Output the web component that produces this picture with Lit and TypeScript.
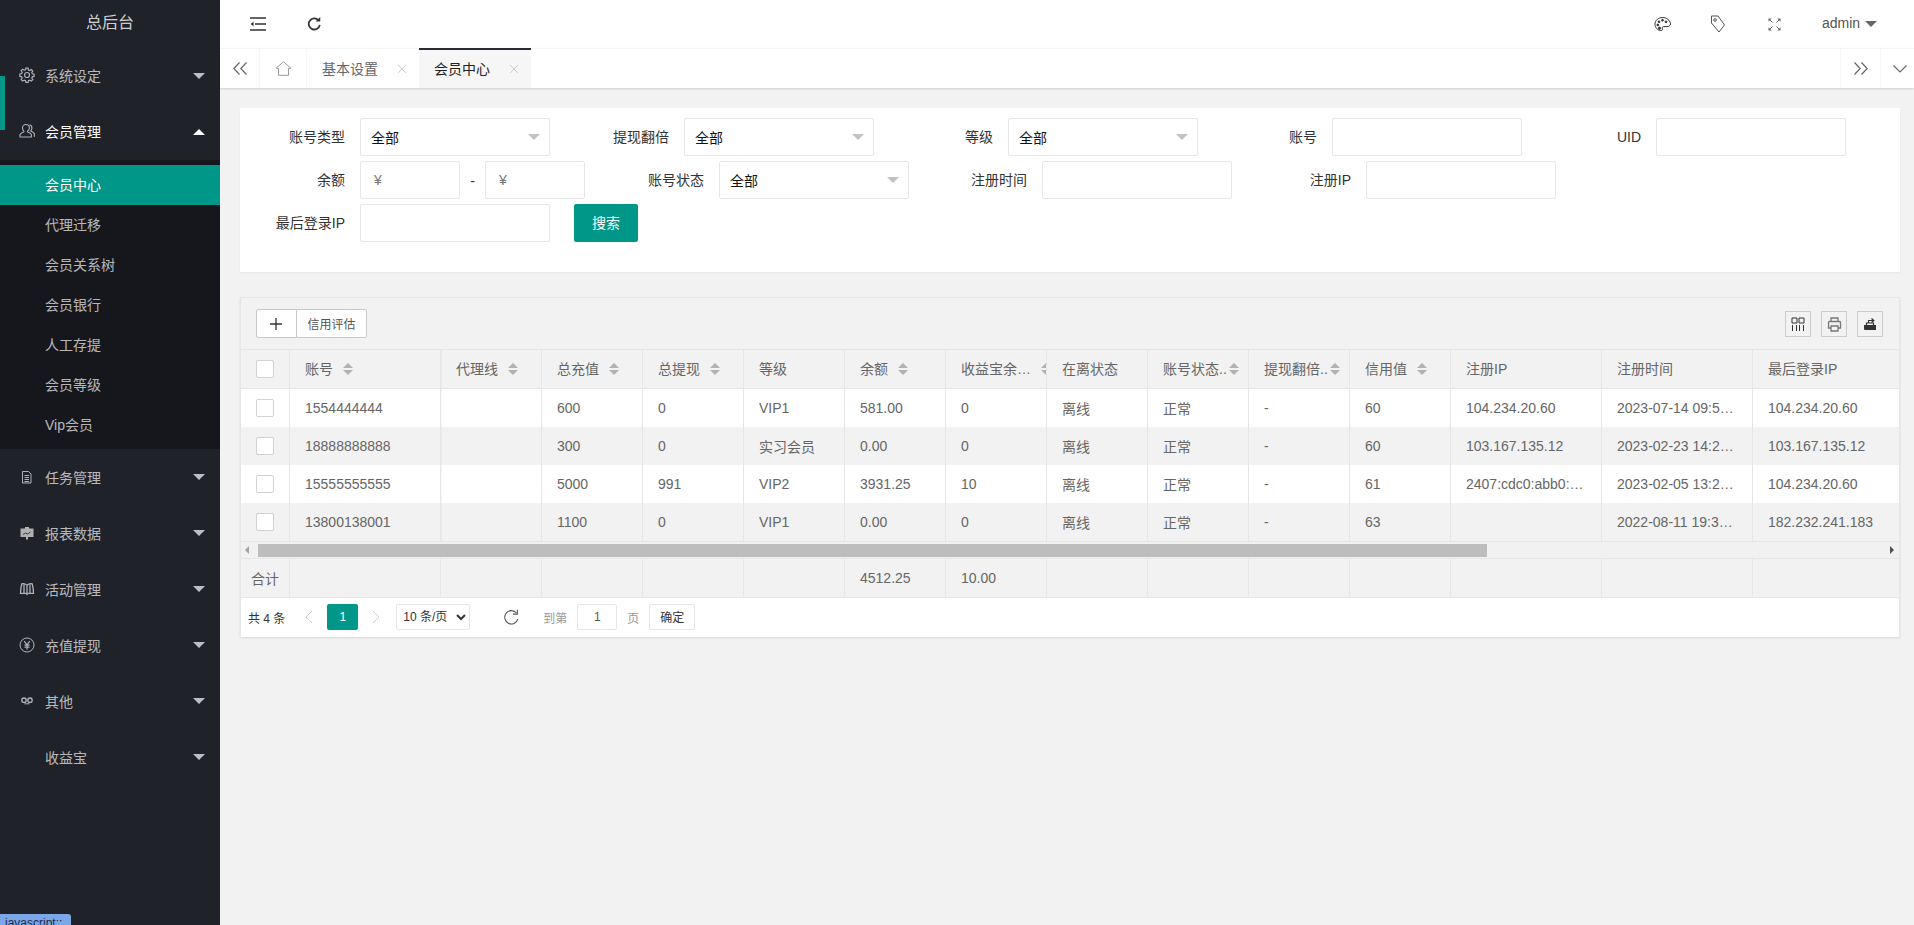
import { LitElement, html, css, svg } from "lit";
import { customElement } from "lit/decorators.js";

const I: Record<string, unknown> = {
  gear: svg`<g stroke-width="1.200"><circle cx="8" cy="8" r="2.500"/><path d="M6.900 1.200h2.200l.4 1.800 1.200.5 1.600-1 1.500 1.500-1 1.600.5 1.200 1.800.4v2.200l-1.800.4-.5 1.200 1 1.600-1.500 1.500-1.600-1-1.200.5-.4 1.800H6.900l-.4-1.800-1.200-.5-1.600 1-1.500-1.500 1-1.600-.5-1.200-1.800-.4V6.900l1.800-.4.5-1.200-1-1.600 1.500-1.500 1.600 1 1.200-.5z"/></g>`,
  user: svg`<g stroke-width="1.100"><path d="M6.700 1.500C4.800 1.500 3.500 3 3.500 5c0 1.300.5 2.400 1.300 3.100.3.300.2.800-.2 1-2 .8-3.300 1.500-3.600 2.500-.2.900-.1 1.600.1 2.400h11.200c.2-.8.3-1.500.1-2.400-.3-1-1.600-1.700-3.600-2.500-.4-.2-.5-.7-.2-1C9.900 7.400 10.400 6.300 10.400 5c0-2-1.300-3.500-3.700-3.500z"/><path d="M10.500 1.700c1.500.4 2.400 1.700 2.400 3.300 0 1.200-.5 2.300-1.200 3 2 .8 3.300 1.500 3.600 2.500.2.900.1 1.900-.1 3.400"/></g>`,
  doc: svg`<g stroke-width="1"><path d="M3.500 2.500h6l2.500 2.500v9H3.500z"/><path d="M5.500 6.500h4.500M5.500 8.500h4.500M5.500 10.500h4.500M5.500 12.500h4.500"/></g>`,
  board: svg`<path fill="currentColor" stroke="none" d="M1.500 3.500h13v8.500h-13zM6 2h4v1.500H6zM7 12h2v2.500H7z"/><path stroke="#20222a" stroke-width=".8" d="M4 9.500l2.500-1.500 2 1 3-2"/>`,
  book: svg`<g stroke-width="1.300"><path d="M8 4.200C6.500 2.800 4.300 2.300 2.800 2.800c-.8 2.800-1.200 6-1.300 9.500h5C7 12.300 7.700 12.700 8 13.300c.3-.6 1-1 1.500-1h5c-.1-3.500-.5-6.700-1.300-9.500-1.500-.5-3.700 0-5.200 1.400zM8 4.200v9M5 3v9.300M11 3v9.300"/></g>`,
  yen: svg`<circle cx="8" cy="8" r="7"/><path stroke-width="1.200" d="M5.200 4.200L8 7.800l2.800-3.600M8 7.800V12.500M5.500 8.200h5M5.500 10.200h5"/>`,
  inf: svg`<circle cx="5" cy="7.200" r="2.200" stroke-width="1.300"/><circle cx="11" cy="7.200" r="2.200" stroke-width="1.300"/><path d="M5.500 10.800h5" stroke-width="1"/>`,
};

const SIDE: { name: string; icon?: string; open?: boolean; lift?: boolean; subs?: string[] }[] = [
  { name: "系统设定", icon: "gear", lift: true },
  { name: "会员管理", icon: "user", open: true, lift: true, subs: ["会员中心", "代理迁移", "会员关系树", "会员银行", "人工存提", "会员等级", "Vip会员"] },
  { name: "任务管理", icon: "doc" },
  { name: "报表数据", icon: "board" },
  { name: "活动管理", icon: "book" },
  { name: "充值提现", icon: "yen" },
  { name: "其他", icon: "inf" },
  { name: "收益宝" },
];

const COLS: { t: string; w: string; sort?: boolean }[] = [
  { t: "账号", w: "w150", sort: true },
  { t: "代理线", w: "w100 fix", sort: true },
  { t: "总充值", w: "w100", sort: true },
  { t: "总提现", w: "w100", sort: true },
  { t: "等级", w: "w100" },
  { t: "余额", w: "w100", sort: true },
  { t: "收益宝余…", w: "w100", sort: true },
  { t: "在离状态", w: "w100" },
  { t: "账号状态..", w: "w100 tight", sort: true },
  { t: "提现翻倍..", w: "w100 tight", sort: true },
  { t: "信用值", w: "w100", sort: true },
  { t: "注册IP", w: "w150" },
  { t: "注册时间", w: "w150" },
  { t: "最后登录IP", w: "w150" },
];

const ROWS: string[][] = [
  ["1554444444", "", "600", "0", "VIP1", "581.00", "0", "离线", "正常", "-", "60", "104.234.20.60", "2023-07-14 09:5…", "104.234.20.60"],
  ["18888888888", "", "300", "0", "实习会员", "0.00", "0", "离线", "正常", "-", "60", "103.167.135.12", "2023-02-23 14:2…", "103.167.135.12"],
  ["15555555555", "", "5000", "991", "VIP2", "3931.25", "10", "离线", "正常", "-", "61", "2407:cdc0:abb0:…", "2023-02-05 13:2…", "104.234.20.60"],
  ["13800138001", "", "1100", "0", "VIP1", "0.00", "0", "离线", "正常", "-", "63", "", "2022-08-11 19:3…", "182.232.241.183"],
];
const TOTAL = ["", "", "", "", "", "4512.25", "10.00", "", "", "", "", "", "", ""];

@customElement("app-root")
export class AppRoot extends LitElement {
  static styles = css`
    :host { display: flex; height: 100vh; width: 100%; overflow: hidden; position: relative; background: #f2f2f2;
      font-family: "Liberation Sans", "Noto Sans CJK SC", sans-serif; font-size: 14px; color: #333; }
    * { box-sizing: border-box; }
    svg { display: block; flex: none; }

    .side { width: 220px; flex: none; background: #20222a; color: rgba(255,255,255,.7); position: relative; }
    .logo { height: 48px; line-height: 45px; text-align: center; font-size: 16px; color: rgba(255,255,255,.8); }
    .nav { height: 56px; display: flex; align-items: center; padding: 0 0 0 19px; position: relative; }
    .nav.lift { padding-bottom: 2px; }
    .nav.open { color: #fff; }
    .nav-ic { width: 16px; height: 16px; margin-right: 10px; fill: none; stroke: currentColor; stroke-width: 1; color: rgba(255,255,255,.65); }
    .nav-sp { width: 16px; height: 16px; margin-right: 10px; flex: none; }
    .tri { position: absolute; left: 193px; top: 25px; width: 0; height: 0; border: 6px solid transparent; border-top-color: rgba(255,255,255,.7); border-bottom-width: 0; }
    .tri.up { border-top-width: 0; border-bottom: 6px solid #fff; }
    .bar { position: absolute; left: 0; top: 76px; width: 5px; height: 54px; background: #009688; }
    .sub { background: rgba(0,0,0,.3); padding: 5px 0 4px; }
    .sub div { height: 40px; line-height: 40px; padding-left: 45px; }
    .sub div.on { background: #009688; color: #fff; }
    .status { position: absolute; left: 0; bottom: 0; width: 71px; height: 11px; overflow: hidden; background: #7ba7e8; color: #1c2b4a; border-top-right-radius: 3px; font-size: 12px; line-height: 18px; padding-left: 5px; white-space: nowrap; }

    .main { flex: 1; min-width: 0; display: flex; flex-direction: column; }
    .head { height: 48px; background: #fff; display: flex; justify-content: space-between; padding-left: 10px; flex: none; }
    .hgroup { display: flex; }
    .hi { width: 56px; display: flex; align-items: center; justify-content: center; color: #333; }
    .hi svg { fill: none; stroke: currentColor; }
    .hi .refresh { margin-bottom: 1px; }
    .admin { display: flex; align-items: center; padding: 0 37px 3px 20px; color: #555; width: 112px; }
    .admin i { width: 0; height: 0; border: 6px solid transparent; border-top-color: #666; border-bottom-width: 0; margin-left: 5px; margin-top: 2px; flex: none; }

    .tabs { height: 40px; background: #fff; display: flex; flex: none; border-top: 1px solid #f6f6f6; box-shadow: 0 1px 2px rgba(0,0,0,.15); position: relative; }
    .tb { width: 40px; display: flex; align-items: center; justify-content: center; border-right: 1px solid #f6f6f6; color: #666; flex: none; }
    .tb svg { fill: none; stroke: currentColor; }
    .tb.home { width: 47px; color: #999; }
    .tab { width: 112px; padding: 0 0 2px 15px; display: flex; align-items: center; color: #666; position: relative; flex: none; }
    .tab.on { background: #f6f6f6; color: #222; width: 112px; }
    .tab.on::before { content: ""; position: absolute; left: 0; right: 0; top: -1px; height: 2px; background: #292b34; }
    .tab svg { position: absolute; left: 90px; top: 15px; stroke: #ccc; fill: none; }
    .tsp { flex: 1; }
    .tb.r { border-left: 1px solid #f6f6f6; border-right: none; }
    .tb.dn { width: 34px; border-left: 1px solid #f6f6f6; border-right: none; padding-left: 5px; }

    .body { flex: 1; min-height: 0; padding: 20px 14px 0 20px; display: flex; flex-direction: column; gap: 25px; }
    .card { background: #fff; padding: 10px 10px 30px; height: 164px; display: flex; flex-direction: column; gap: 5px; box-shadow: 0 1px 2px rgba(0,0,0,.05); }
    .frow { display: flex; height: 38px; }
    .lab { width: 110px; flex: none; padding-right: 15px; text-align: right; line-height: 39px; color: #333; white-space: nowrap; }
    .fld { width: 190px; height: 38px; flex: none; border: 1px solid #e6e6e6; border-radius: 2px; background: #fff; position: relative; padding-left: 10px; line-height: 38px; color: #111; }
    .fld.sel::after { content: ""; position: absolute; right: 9px; top: 15px; width: 0; height: 0; border: 6px solid transparent; border-top-color: #c2c2c2; border-bottom-width: 0; }
    .fld.s { width: 100px; color: #757575; padding-left: 13px; line-height: 36px; }
    .dash { width: 25px; text-align: center; line-height: 40px; color: #333; flex: none; }
    .item { display: flex; flex: none; margin-right: 24px; }
    .item.snug { margin-right: 23px; }
    .btn { width: 64px; height: 38px; background: #009688; color: #fff; border-radius: 2px; text-align: center; line-height: 38px; margin-left: 24px; flex: none; }

    .box { height: 340px; background: #fff; border: 1px solid #e6e6e6; border-bottom: none; display: flex; flex-direction: column; box-shadow: 0 1px 2px rgba(0,0,0,.1); overflow: hidden; flex: none; }
    .tool { height: 52px; flex: none; background: #f2f2f2; border-bottom: 1px solid #e6e6e6; display: flex; justify-content: space-between; padding: 11px 16px 0 15px; }
    .tgroup { display: flex; height: 29px; }
    .tbtn { height: 29px; border: 1px solid #c9c9c9; background: #fff; display: flex; align-items: center; justify-content: center; font-size: 12px; color: #555; }
    .tbtn.plus { width: 41px; border-radius: 2px 0 0 2px; color: #333; padding-right: 2px; }
    .tbtn.txt { width: 70px; border-left: none; border-radius: 0 2px 2px 0; }
    .rgroup { display: flex; gap: 10px; margin-top: 2px; }
    .tool-i { width: 26px; height: 26px; border: 1px solid #ccc; display: flex; align-items: center; justify-content: center; color: #333; }
    .tool-i svg { fill: none; stroke: currentColor; }

    .twrap { overflow: hidden; flex: none; }
    table { border-collapse: separate; border-spacing: 0; table-layout: fixed; width: 1663px; color: #666; }
    td, th { height: 38px; padding: 0; border-right: 1px solid #e6e6e6; border-bottom: 1px solid #e6e6e6; font-weight: 400; text-align: left; overflow: hidden; white-space: nowrap; }
    tbody tr td { border-bottom: none; height: 38px; background: #fff; }
    tbody tr:nth-child(even) td { background: #f2f2f2; }
    th { background: #f2f2f2; height: 39px; }
    .cell { display: flex; align-items: center; padding-left: 15px; height: 100%; overflow: hidden; }
    th .cell span { margin-bottom: 2px; }
    .c-check { width: 49px; }
    .w100 { width: 101px; }
    .w150 { width: 151px; }
    td.fix, th.fix { box-shadow: inset 1px 0 1px rgba(0,0,0,.03); }
    .cb { width: 18px; height: 18px; background: #fff; border: 1px solid #d2d2d2; border-radius: 2px; margin-left: 15px; }
    .sort { display: block; width: 10px; height: 12px; margin-left: 10px; position: relative; flex: none; }
    .tight .sort { margin-left: 2px; }
    .sort::before, .sort::after { content: ""; position: absolute; left: 0; width: 0; height: 0; border: 5px solid transparent; }
    .sort::before { top: 0; border-top: none; border-bottom-color: #b2b2b2; }
    .sort::after { bottom: 0; border-bottom: none; border-top-color: #b2b2b2; }

    .sbar { height: 18px; flex: none; background: #f1f1f1; border-top: 1px solid #e6e6e6; border-bottom: 1px solid #e6e6e6; position: relative; display: flex; align-items: center; }
    .thumb { position: absolute; left: 17px; top: 2px; width: 1229px; height: 13px; background: #bdbdbd; }
    .sl, .sr { position: absolute; top: 4px; width: 0; height: 0; border: 4px solid transparent; }
    .sl { left: 4px; border-left: none; border-right-color: #a3a3a3; }
    .sr { right: 5px; border-right: none; border-left-color: #505050; }
    .tot td { background: #f2f2f2 !important; height: 39px !important; border-bottom: 1px solid #e6e6e6 !important; }
    .tot .sumc { padding-left: 10px; }

    .page { flex: 1; background: #fff; display: flex; align-items: center; padding: 0 0 1px 7px; font-size: 12px; color: #333; }
    .pager-n { width: 31px; height: 26px; background: #009688; color: #fff; border-radius: 2px; text-align: center; line-height: 26px; flex: none; }
    .page svg { fill: none; flex: none; }
    .psel { width: 74px; height: 26px; border: 1px solid #e6e6e6; border-radius: 2px; background: #fff; font: inherit; color: #333; padding: 0 0 0 2px; margin-left: 16px; flex: none; }
    .pg { color: #999; }
    .pin { width: 40px; height: 26px; border: 1px solid #e6e6e6; border-radius: 2px; text-align: center; line-height: 24px; color: #555; flex: none; margin: 0 10px; }
    .pok { width: 46px; height: 26px; border: 1px solid #e6e6e6; border-radius: 2px; text-align: center; line-height: 26px; color: #333; margin-left: 10px; flex: none; }
    .chev-l { margin: 0 14px 0 20px; }
    .chev-r { margin-left: 14px; }
    .reload { margin: 0 23px 0 33px; }
    .grey { color: #777; }
    .tgrey { color: #555; }
    .fgrey { color: #666; }
  `;

  private sidebar() {
    return html`<aside class="side">
      <div class="logo">总后台</div>
      ${SIDE.map(
        (m) => html`<div class="nav ${m.open ? "open" : ""} ${m.lift ? "lift" : ""}">
            ${m.icon ? html`<svg class="nav-ic" viewBox="0 0 16 16">${I[m.icon]}</svg>` : html`<span class="nav-sp"></span>`}
            <span>${m.name}</span><i class="tri ${m.open ? "up" : ""}"></i>
          </div>
          ${m.subs ? html`<div class="sub">${m.subs.map((s, i) => html`<div class="${i === 0 ? "on" : ""}">${s}</div>`)}</div>` : ""}`
      )}
      <i class="bar"></i>
      <div class="status">javascript:;</div>
    </aside>`;
  }

  private header() {
    return html`<header class="head">
      <div class="hgroup">
        <div class="hi"><svg width="16" height="14" viewBox="0 0 16 14" stroke-width="1.500"><path d="M0 1h16M5 7h11M0 13h16"/><path d="M3.500 5L1 7l2.500 2" fill="#333" stroke-width=".6"/></svg></div>
        <div class="hi"><svg class="refresh" width="15" height="15" viewBox="0 0 16 17" stroke-width="2"><path d="M12.500 4.800A6.300 6.300 0 1 0 14 10"/><path d="M14.500 1v5.300H9.200z" fill="#333" stroke="none"/></svg></div>
      </div>
      <div class="hgroup">
        <div class="hi"><svg width="17" height="16" viewBox="0 0 17 16" stroke-width="1"><path d="M8.500 1.500C4.500 1.500 1 4.200 1 8.200c0 3.500 2.800 6.300 6 6.300 1.500 0 1.800-1 1.400-1.900-.4-1 .1-2 1.300-2h3.300c1.800 0 3.500-1 3.500-2.900C16 4 12.500 1.500 8.500 1.500z"/><circle cx="5" cy="5.800" r=".9" fill="#333"/><circle cx="8.500" cy="4.200" r=".9" fill="#333"/><circle cx="12" cy="5.800" r=".9" fill="#333"/><circle cx="3.800" cy="9" r=".9" fill="#333"/><circle cx="5.500" cy="12.200" r="1.100" fill="#333"/></svg></div>
        <div class="hi"><svg class="tgrey" width="16" height="18" viewBox="0 0 16 18" stroke-width="1"><path d="M1.500 1h6.500l6.500 9-5.500 7L1.500 8z"/><circle cx="5" cy="5" r="1.300"/></svg></div>
        <div class="hi"><svg class="fgrey" width="13" height="13" viewBox="0 0 13 13" stroke-width="1"><path d="M.5.500h3.200L.5 3.700zM12.500.500H9.300l3.200 3.200zM.5 12.500h3.200L.5 9.300zM12.500 12.500H9.300l3.200-3.200z" fill="#666" stroke="none"/><path d="M1.500 1.500L4.500 4.500M11.500 1.500L8.500 4.500M1.500 11.500L4.500 8.500M11.500 11.500L8.500 8.500"/></svg></div>
        <div class="admin">admin<i></i></div>
      </div>
    </header>`;
  }

  private tabs() {
    const x = html`<svg width="10" height="10" viewBox="0 0 10 10"><path d="M1 1l8 8M9 1L1 9"/></svg>`;
    return html`<nav class="tabs">
      <div class="tb"><svg width="14" height="13" viewBox="0 0 14 13"><path d="M6.500 .5L.8 6.500l5.700 6M13.500 .5L7.800 6.500l5.700 6" stroke-width="1.200"/></svg></div>
      <div class="tb home"><svg width="17" height="15" viewBox="0 0 17 15"><path d="M8.500 0.700L1 7.300h2.500v7h10v-7H16z"/></svg></div>
      <div class="tab">基本设置${x}</div>
      <div class="tab on">会员中心${x}</div>
      <div class="tsp"></div>
      <div class="tb r"><svg width="14" height="13" viewBox="0 0 14 13"><path d="M.5 .5L6.200 6.500l-5.700 6M7.500 .5l5.700 6-5.700 6" stroke-width="1.200"/></svg></div>
      <div class="tb dn"><svg width="14" height="8" viewBox="0 0 14 8"><path d="M0.500 0.500L7 7l6.500-6.500" stroke-width="1.100"/></svg></div>
    </nav>`;
  }

  private form() {
    const sel = (l: string, cls = "") => html`<div class="item ${cls}"><div class="lab">${l}</div><div class="fld sel">全部</div></div>`;
    const inp = (l: string) => html`<div class="item"><div class="lab">${l}</div><div class="fld"></div></div>`;
    return html`<section class="card">
      <div class="frow">${sel("账号类型")}${sel("提现翻倍")}${sel("等级")}${inp("账号")}${inp("UID")}</div>
      <div class="frow">
        <div class="item"><div class="lab">余额</div><div class="fld s">¥</div><div class="dash">-</div><div class="fld s">¥</div></div>
        ${sel("账号状态", "snug")}${inp("注册时间")}${inp("注册IP")}
      </div>
      <div class="frow"><div class="lab">最后登录IP</div><div class="fld"></div><div class="btn">搜索</div></div>
    </section>`;
  }

  private table() {
    return html`<div class="twrap"><table>
      <colgroup><col class="c-check" />${COLS.map((c) => html`<col class="${c.w.split(" ")[0]}" />`)}</colgroup>
      <thead><tr>
        <th><div class="cb"></div></th>
        ${COLS.map((c) => html`<th class="${c.w}"><div class="cell"><span>${c.t}</span>${c.sort ? html`<i class="sort"></i>` : ""}</div></th>`)}
      </tr></thead>
      <tbody>
        ${ROWS.map(
          (r) => html`<tr><td><div class="cb"></div></td>${r.map((v, i) => html`<td class="${COLS[i].w}"><div class="cell">${v}</div></td>`)}</tr>`
        )}
      </tbody>
    </table></div>
    <div class="sbar"><i class="sl"></i><div class="thumb"></div><i class="sr"></i></div>
    <div class="twrap"><table>
      <colgroup><col class="c-check" />${COLS.map((c) => html`<col class="${c.w.split(" ")[0]}" />`)}</colgroup>
      <tbody><tr class="tot"><td><div class="cell sumc">合计</div></td>${TOTAL.map((v) => html`<td><div class="cell">${v}</div></td>`)}</tr></tbody>
    </table></div>`;
  }

  private pager() {
    return html`<div class="page">
      <span>共 4 条</span>
      <svg class="chev-l" width="8" height="14" viewBox="0 0 8 14" stroke="#d2d2d2"><path d="M7 1L1 7l6 6"/></svg>
      <div class="pager-n">1</div>
      <svg class="chev-r" width="8" height="14" viewBox="0 0 8 14" stroke="#d2d2d2"><path d="M1 1l6 6-6 6"/></svg>
      <select class="psel"><option>10 条/页</option></select>
      <svg class="reload" width="17" height="17" viewBox="0 0 16 16" stroke="#555" stroke-width="1"><path d="M12.800 3.800A6.300 6.300 0 1 0 14 9.500"/><path d="M13.500 0.800v4h-4"/></svg>
      <span class="pg">到第</span><div class="pin">1</div><span class="pg">页</span>
      <div class="pok">确定</div>
    </div>`;
  }

  render() {
    return html`${this.sidebar()}
      <div class="main">
        ${this.header()}${this.tabs()}
        <div class="body">
          ${this.form()}
          <section class="box">
            <div class="tool">
              <div class="tgroup">
                <div class="tbtn plus"><svg width="12" height="12" viewBox="0 0 12 12" fill="none" stroke="#333" stroke-width="1.300"><path d="M6 0v12M0 6h12"/></svg></div>
                <div class="tbtn txt">信用评估</div>
              </div>
              <div class="rgroup">
                <div class="tool-i"><svg width="14" height="14" viewBox="0 0 14 14"><path d="M1 1h5v5H1zM8 1h5v5H8zM1.500 8v6M5.500 8v6M8.500 8v6M12.500 8v6"/></svg></div>
                <div class="tool-i grey"><svg width="15" height="15" viewBox="0 0 15 15" stroke-width="1.300"><path d="M4 5V1h7v4M3.500 11H1.500V5.500q0-1 1-1h10q1 0 1 1V11h-2M4 9h7v5H4z"/></svg></div>
                <div class="tool-i"><svg width="14" height="14" viewBox="0 0 14 14"><path d="M1 8h12v5H2q-1 0-1-1z" fill="#333" stroke="none"/><path d="M3.500 8V6h7v2" stroke-width="1.200"/><path d="M5.500 6V3.500h5M8.500 1.500l2.300 2-2.300 2" stroke-width="1.200"/></svg></div>
              </div>
            </div>
            ${this.table()}${this.pager()}
          </section>
        </div>
      </div>`;
  }
}
